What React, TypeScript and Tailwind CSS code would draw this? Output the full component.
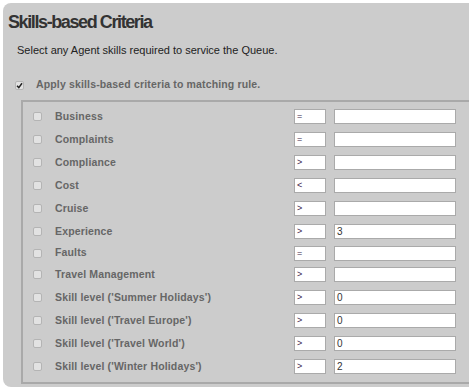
import React from 'react';

type Skill = { name: string; op: string; value: string };

const skills: Skill[] = [
  { name: 'Business', op: '=', value: '' },
  { name: 'Complaints', op: '=', value: '' },
  { name: 'Compliance', op: '>', value: '' },
  { name: 'Cost', op: '<', value: '' },
  { name: 'Cruise', op: '>', value: '' },
  { name: 'Experience', op: '>', value: '3' },
  { name: 'Faults', op: '=', value: '' },
  { name: 'Travel Management', op: '>', value: '' },
  { name: "Skill level ('Summer Holidays')", op: '>', value: '0' },
  { name: "Skill level ('Travel Europe')", op: '>', value: '0' },
  { name: "Skill level ('Travel World')", op: '>', value: '0' },
  { name: "Skill level ('Winter Holidays')", op: '>', value: '2' },
];

const Box: React.FC<{ checked?: boolean }> = ({ checked }) => (
  <div className="w-[9px] h-[9px] shrink-0 rounded-[2px] border border-[#b4b4b4] bg-[#e2e2e2] flex items-center justify-center">
    {checked && (
      <svg width="7" height="7" viewBox="0 0 7 7">
        <path d="M1 3.8 L2.8 5.6 L6 1.2" stroke="#222" strokeWidth="1.5" fill="none" />
      </svg>
    )}
  </div>
);

export default function App() {
  return (
    <div className="w-[469px] h-[392px] bg-white overflow-hidden font-['Liberation_Sans',Arial,sans-serif]">
      <div className="ml-[3px] mt-[3px] h-[384px] bg-[#cccccc] rounded-l-[8px] pt-[7px] pl-[5px] overflow-hidden">
        <h1 className="text-[18px] leading-[24px] font-bold tracking-[-1.4px] text-[#333]">Skills-based Criteria</h1>
        <p className="mt-[9px] ml-[9px] text-[11px] leading-[14px] text-[#222]">
          Select any Agent skills required to service the Queue.
        </p>
        <div className="mt-[22px] ml-[7px] flex items-center gap-[12px] h-[12px]">
          <Box checked />
          <span className="text-[10.5px] tracking-[0.15px] font-bold text-[#666]">Apply skills-based criteria to matching rule.</span>
        </div>
        <div className="mt-[9px] ml-[13px] w-[470px] border-2 border-[#a9a9a9] pt-[3px] pb-[4px] pl-[10px]">
          {skills.map((s) => (
            <div key={s.name} className={`flex items-center ${s.name === 'Faults' ? 'h-[20px]' : 'h-[23px]'}`}>
              <Box />
              <span className="ml-[13px] w-[239px] text-[10.5px] tracking-[0.15px] font-bold text-[#666]">{s.name}</span>
              <div className="w-[32px] h-[15px] bg-white border border-[#aaa] pl-[2px] text-[9px] leading-[13px] text-[#3a1a48]">{s.op}</div>
              <div className="ml-[8px] w-[122px] h-[15px] bg-white border border-[#aaa] pl-[2px] text-[10px] leading-[13px] text-[#333]">{s.value}</div>
            </div>
          ))}
        </div>
      </div>
    </div>
  );
}
